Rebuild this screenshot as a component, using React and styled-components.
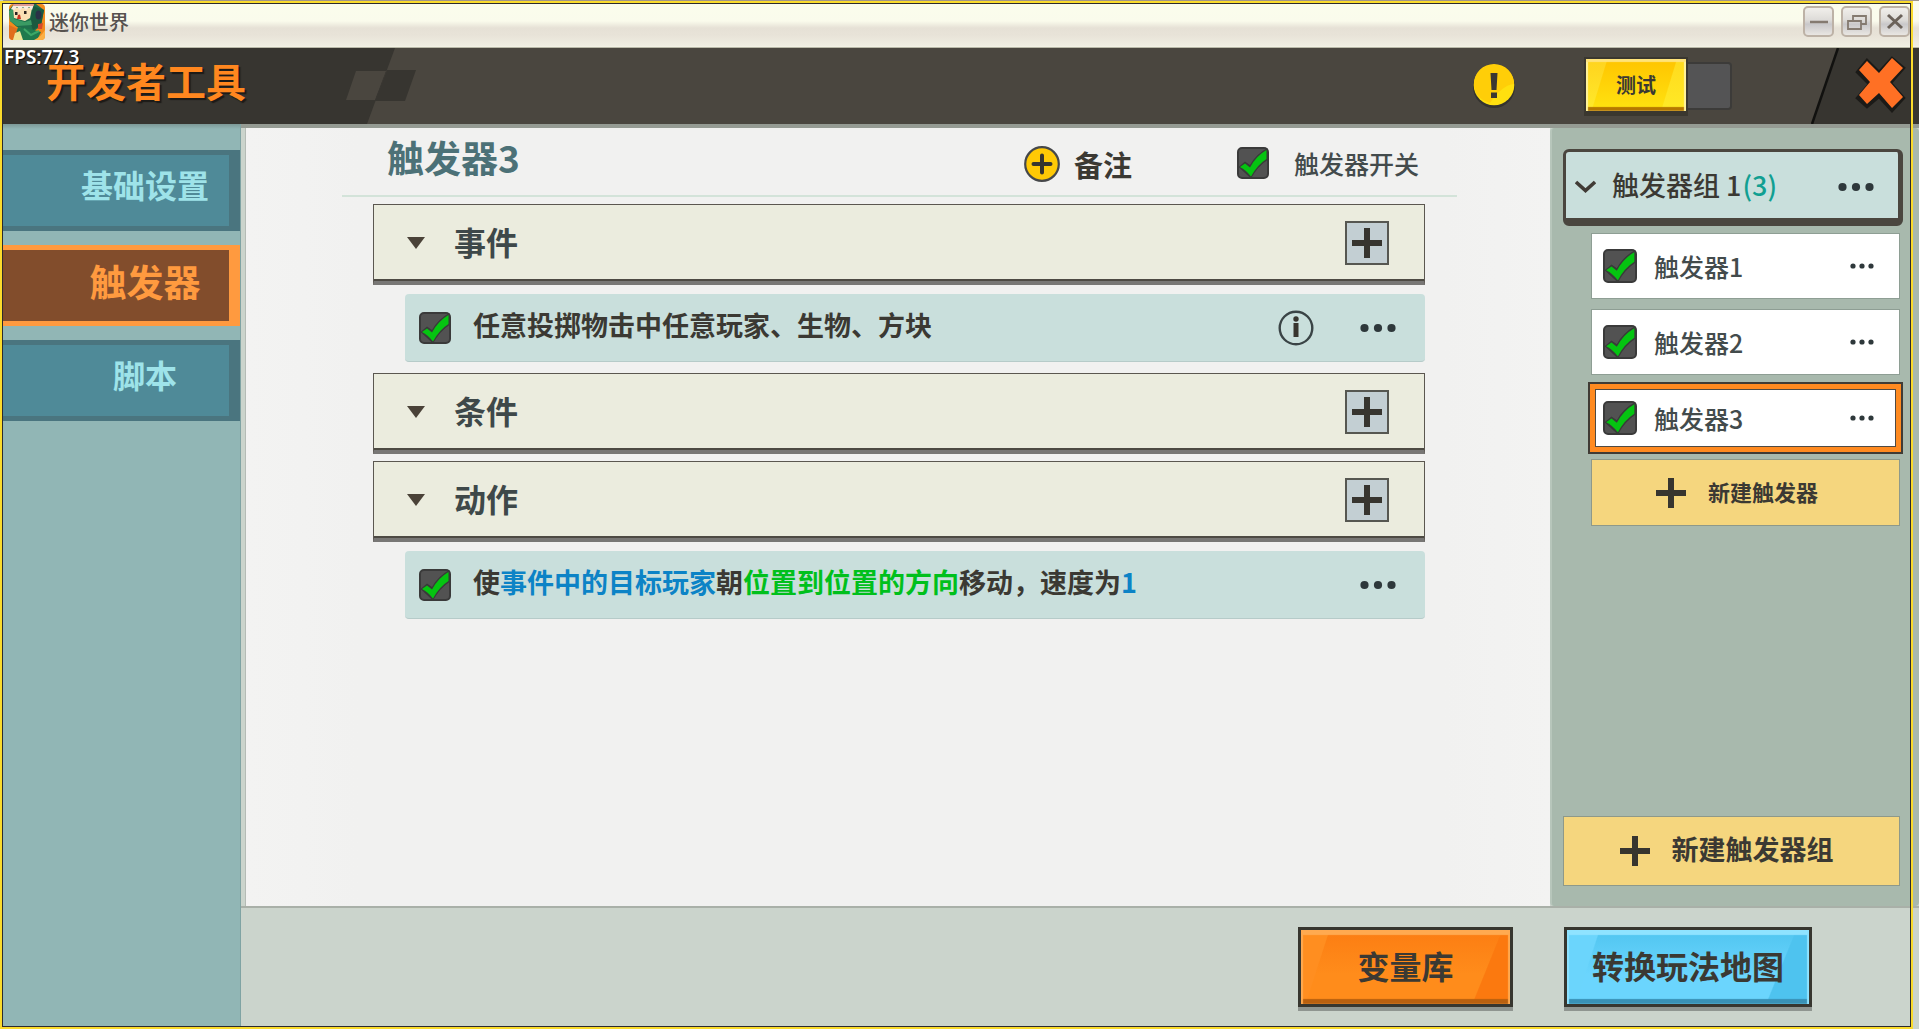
import { useState } from "react"
import styled, { createGlobalStyle } from "styled-components"

const GlobalStyle = createGlobalStyle`
    * {
        box-sizing: border-box;
    }
    body {
        margin: 0;
        font-family: "Noto Sans CJK SC", "Noto Sans", sans-serif;
        font-weight: 700;
        color: #3b3933;
        background: #cbd4cc;
    }
    button {
        font: inherit;
        color: inherit;
        border: 0;
        padding: 0;
        background: none;
        cursor: pointer;
    }
    h1, h2, h3, p, ul {
        margin: 0;
        padding: 0;
        font: inherit;
    }
    svg {
        display: block;
        flex: none;
    }
`

const Page = styled.div`
    position: relative;
    min-height: 100vh;
    display: flex;
    flex-direction: column;
    padding-left: 3px;
`
const Frame = styled.div`
    position: absolute;
    inset: 1px 6px 0 0;
    border: 2px solid #fadb2c;
    pointer-events: none;
    z-index: 5;
    &::after {
        content: "";
        position: absolute;
        inset: 0;
        border: 1px solid #2c2a2e;
    }
`

/* window title bar */
const TitleBar = styled.div`
    height: 48px;
    flex: none;
    display: flex;
    align-items: center;
    padding: 0 9px 5px 6px;
    border-top: 1px solid #a0958a;
    border-bottom: 1px solid #b9b9a8;
    background: linear-gradient(#fbfdec 0, #fafbec 20px, #e6e1d6 27px, #e8e3d8 34px, #f0eee2 45px, #fdfef0 47px);
`
const WindowName = styled.span`
    flex: 1;
    margin-left: 4px;
    font-size: 20px;
    line-height: 24px;
    font-weight: 500;
    color: #57524f;
`
const WindowButtons = styled.div`
    display: flex;
    gap: 7px;
`
const WindowButton = styled.button`
    width: 31px;
    height: 31px;
    display: grid;
    place-items: center;
    border: 2px solid #bdb2a6;
    border-radius: 5px;
    background: linear-gradient(#f1efeb, #dddbd8 45%, #c9c8ca 60%, #e9e6e2);
`

/* tool header */
const Header = styled.header`
    position: relative;
    height: 76px;
    flex: none;
    display: flex;
    align-items: center;
    justify-content: space-between;
    background: #4a463f;
`
const HeaderLeft = styled.div`
    height: 76px;
    display: grid;
    align-items: center;
    > * {
        grid-area: 1 / 1;
    }
`
const HeaderTitle = styled.h1`
    margin: 0 0 12px 43px;
    font-size: 40px;
    line-height: 44px;
    color: #ff871f;
    text-shadow: 2px 2px 1px #1c1a17;
`
const Fps = styled.span`
    position: absolute;
    top: -4px;
    left: 1px;
    font-family: "Noto Sans", sans-serif;
    font-size: 19px;
    line-height: 26px;
    font-weight: 600;
    color: #fff;
    text-shadow: 1px 1px 1px #000;
`
const HeaderRight = styled.div`
    display: flex;
    align-items: center;
`
const TestSwitch = styled.button`
    display: flex;
    align-items: center;
    margin: 0 79px 0 68px;
`
const TestKnob = styled.span`
    width: 104px;
    height: 59px;
    display: grid;
    place-items: center;
    border: 2px solid #3a372f;
    border-bottom-width: 5px;
    font-size: 20px;
    line-height: 24px;
    background: linear-gradient(107deg, rgba(255, 255, 120, 0.25) 18%, transparent 19%, transparent 78%, rgba(255, 240, 60, 0.5) 79%),
        linear-gradient(#ffc400, #ffe310);
    box-shadow: inset 0 3px 1px #ffe37a, inset 2px 0 1px #fff3a0, inset -2px 0 1px #fff3a0, inset 0 -4px 1px #b67800;
`
const TestSlot = styled.span`
    width: 44px;
    height: 48px;
    border: 2px solid #3c3b39;
    border-left: 0;
    border-radius: 0 4px 4px 0;
    background: #545455;
`
const CloseButton = styled.button`
    height: 76px;
`

/* body */
const Body = styled.div`
    flex: 1;
    display: flex;
`
const Sidebar = styled.nav`
    width: 238px;
    flex: none;
    display: flex;
    flex-direction: column;
    gap: 14px;
    padding-top: 26px;
    background: linear-gradient(#7d9997, #91b6b5 5px);
    border-right: 1px solid #7fa3a3;
`
const Tab = styled.button`
    height: 81px;
    padding: 0 0 ${props => props.$active ? 10 : 14}px 58px;
    border: 5px solid ${props => props.$active ? "#ff9a3f" : "#4a757f"};
    border-width: 5px 11px 5px 0;
    background: ${props => props.$active ? "#824d2c" : "#4f8a98"};
    color: ${props => props.$active ? "#ff9a3f" : "#9ee3e9"};
    font-size: ${props => props.$active ? 37 : 32}px;
    line-height: 40px;
`
const Content = styled.div`
    flex: 1;
    min-width: 0;
    display: flex;
    flex-direction: column;
    background: #cbd4cc;
`
const Workspace = styled.div`
    flex: 1;
    display: flex;
    padding-left: 4px;
    border-top: 4px solid #959b93;
    border-bottom: 2px solid #a9b0a8;
`
const Editor = styled.main`
    flex: 1;
    min-width: 0;
    padding: 0 93px 0 96px;
    background: linear-gradient(90deg, #f3f3f2, #f1f1f0 112px, #f1f1f0 calc(100% - 105px), #f3f3f2);
    border-left: 1px solid #b4bbb5;
`
const EditorHead = styled.div`
    height: 69px;
    display: flex;
    align-items: center;
    padding: 2px 38px 0 45px;
    border-bottom: 2px solid #d3e3d9;
`
const TriggerTitle = styled.h2`
    flex: 1;
    font-size: 37px;
    line-height: 40px;
    padding-bottom: 12px;
    color: #4c7177;
`
const NoteButton = styled.button`
    display: flex;
    align-items: center;
    gap: 14px;
    margin-right: 105px;
    padding-top: 2px;
    font-size: 29px;
    line-height: 32px;
`
const SwitchLabel = styled.label`
    display: flex;
    align-items: center;
    gap: 25px;
    font-size: 25px;
    line-height: 32px;
    font-weight: 500;
    color: #434b4c;
`
const Sections = styled.div`
    padding: 7px 32px 0 31px;
`
const SectionHead = styled.div`
    height: 81px;
    margin-top: ${props => props.$first ? 0 : props.$tight ? 7 : 11}px;
    padding: 0 35px 0 33px;
    display: flex;
    align-items: center;
    border: 1px solid #5b5750;
    border-bottom: 4px solid #787775;
    box-shadow: inset 0 -2px 0 #4d4a43;
    background: #ebecde;
`
const SectionName = styled.h3`
    flex: 1;
    margin-left: 29px;
    padding-bottom: 4px;
    font-size: 32px;
    line-height: 40px;
    color: #3e4849;
`
const AddButton = styled.button`
    width: 44px;
    height: 44px;
    display: grid;
    place-items: center;
    border: 2px solid #565751;
    background: #c3cfd3;
`
const Rule = styled.div`
    height: 68px;
    margin: 9px 0 0 32px;
    padding: 0 29px 0 14px;
    display: flex;
    align-items: center;
    gap: 46px;
    border-radius: 4px;
    border-bottom: 1px solid #b6cbc9;
    background: #c9dfdc;
`
const RuleLabel = styled.label`
    flex: 1;
    display: flex;
    align-items: center;
    gap: 22px;
    font-size: 27px;
    line-height: 32px;
`
const RuleText = styled.span`
    padding-bottom: 6px;
`
const Param = styled.span`
    color: ${props => props.$kind === "object" ? "#0c83c6" : "#00c01c"};
`
const IconButton = styled.button`
    display: grid;
    place-items: center;
`

/* check box */
const CheckWrap = styled.span`
    display: grid;
    width: ${props => props.$size}px;
    height: ${props => props.$size}px;
    > * {
        grid-area: 1 / 1;
    }
    svg {
        pointer-events: none;
    }
    input {
        appearance: none;
        margin: 0;
        border: 2px solid #3a3a3a;
        border-radius: 5px;
        background: #525252;
    }
    input:not(:checked) + svg {
        display: none;
    }
`

/* trigger list */
const Triggers = styled.aside`
    width: 369px;
    flex: none;
    display: flex;
    flex-direction: column;
    padding: 21px 16px 20px 11px;
    border-left: 2px solid #b7c6bb;
    border-radius: 4px;
    background: #a8b9ad;
`
const GroupHead = styled.div`
    height: 77px;
    padding: 4px 24px 0 9px;
    display: flex;
    align-items: center;
    border: 3px solid #4a463f;
    border-right-width: 5px;
    border-bottom-width: 8px;
    border-radius: 6px;
    background: #c9dfdc;
`
const GroupName = styled.h3`
    flex: 1;
    margin-left: 16px;
    padding-bottom: 4px;
    font-size: 27px;
    line-height: 32px;
    font-weight: 500;
`
const Count = styled.span`
    margin-left: 1px;
    color: #119f92;
`
const TriggerList = styled.ul`
    list-style: none;
    padding: 7px 3px 0 28px;
    display: flex;
    flex-direction: column;
    gap: 10px;
`
const TriggerItem = styled.li`
    height: 66px;
    padding: 0 25px 0 11px;
    display: flex;
    align-items: center;
    background: #fff;
    border: 1px solid #8e9e94;
    outline: ${props => props.$active ? "5px solid #ff8a20" : "none"};
    outline-offset: -4px;
    box-shadow: ${props => props.$active ? "0 0 0 3px #403b35, inset 0 0 0 4px #4f4a43" : "none"};
`
const TriggerLabel = styled.label`
    flex: 1;
    margin-left: 17px;
    font-size: 25px;
    line-height: 32px;
    font-weight: 500;
    color: #434b4c;
`
const NewButton = styled.button`
    height: ${props => props.$large ? 70 : 67}px;
    margin: ${props => props.$large ? "auto 3px 0 0" : "8px 3px 0 28px"};
    padding-right: ${props => props.$large ? 10 : 17}px;
    display: flex;
    align-items: center;
    justify-content: center;
    gap: 22px;
    border: 1px solid #8e998a;
    background: #f5d67e;
    font-size: ${props => props.$large ? 27 : 22}px;
    line-height: 32px;
    span {
        padding-bottom: 4px;
    }
`

/* footer */
const Footer = styled.footer`
    height: 121px;
    display: flex;
    justify-content: flex-end;
    gap: 51px;
    padding: 19px 107px 0 0;
`
const FooterButton = styled.button`
    height: 80px;
    width: ${props => props.$wide ? 248 : 215}px;
    padding-bottom: 5px;
    border: 3px solid #37362f;
    font-size: 32px;
    line-height: 40px;
    background: ${props => props.$wide
        ? "linear-gradient(108deg, #6bd5fc 12%, transparent 12.5%), linear-gradient(112deg, transparent 84%, #4ec3ef 84.5%), linear-gradient(#50c5f0, #6bd5fd 60%)"
        : "linear-gradient(108deg, #ff8e20 12%, transparent 12.5%), linear-gradient(112deg, transparent 84%, #fb790f 84.5%), linear-gradient(#fc7d12, #ff8c1b 60%)"};
    box-shadow: 0 4px 0 #8f9590,
        inset 0 5px 1px ${props => props.$wide ? "#8fe3ff" : "#ffaa50"},
        inset 2px 0 1px ${props => props.$wide ? "#8fe3ff" : "#ffaa50"},
        inset -2px 0 1px ${props => props.$wide ? "#8fe3ff" : "#ffaa50"},
        inset 0 -5px 1px ${props => props.$wide ? "#3991b5" : "#b9600f"};
`

const GameIcon = () => (
    <svg width="36" height="36" viewBox="0 0 36 36">
        <rect width="36" height="36" rx="4" fill="#f28a1c" />
        <path d="M0 21 9 25 4 36Q0 36 0 32Z" fill="#e06f1d" />
        <path d="M0 6 4 1 27 0 35 6 32 22 25 27 8 23 1 17Z" fill="#1f6f4b" />
        <path d="M24 2 35 6 32 21 24 26 21 18Z" fill="#1a5a40" />
        <path d="M0 7 4 4 5 15 16 18 22 16 23 21 8 22 1 17Z" fill="#3a9a63" />
        <path d="M4 4H23L21 14 16 17 5 14Z" fill="#fbe0b4" />
        <path d="M2 5 5 0H25L23 6 20 3 17 6 14 3 11 6 8 3 5 6Z" fill="#f8ece0" />
        <path d="M4 1H25" stroke="#d98272" strokeWidth="1.500" />
        <rect x="6" y="8" width="2.500" height="3" fill="#2b2320" />
        <rect x="15" y="7" width="2.500" height="3" fill="#2b2320" />
        <path d="M9 11 11 10.500 12 15 8 15Z" fill="#c8321f" />
        <ellipse cx="29.500" cy="11" rx="3" ry="4.500" fill="#2a3146" />
        <path d="M9 23 25 26 32 28 28 36H5Z" fill="#1f7a4d" />
        <path d="M15 25 22 31 30 27" stroke="#3ca867" strokeWidth="2" fill="none" />
        <path d="M6 29 11 27 14 36H4Z" fill="#f0e596" />
        <path d="M29 20 34 19 33 25 29 25Z" fill="#d64a2c" />
        <path d="M25 36Q32 33 36 26V32Q36 36 32 36Z" fill="#fbb044" />
    </svg>
)

const Dots = ({ small }) => (
    small
        ? <svg width="24" height="8" viewBox="0 0 24 8" fill="#2e383b">
            <circle cx="3" cy="4" r="2.6" /><circle cx="12" cy="4" r="2.6" /><circle cx="21" cy="4" r="2.6" />
        </svg>
        : <svg width="36" height="10" viewBox="0 0 36 10" fill="#2e383b">
            <circle cx="4.500" cy="5" r="4.100" /><circle cx="18" cy="5" r="4.100" /><circle cx="31.500" cy="5" r="4.100" />
        </svg>
)

const Plus = () => (
    <svg width="30" height="30" viewBox="0 0 30 30" stroke="#37352f" strokeWidth="6">
        <path d="M15 0V30M0 15H30" />
    </svg>
)

const Check = ({ id, size = 32 }) => (
    <CheckWrap $size={size}>
        <input type="checkbox" id={id} defaultChecked />
        <svg width={size} height={size} viewBox="0 0 32 32">
            <path d="M1.500 20 8 14.500 13 18Q19 7 30.500 1V13Q21 19 14 31.500Z" fill="#393a39" />
            <path d="M3 20 8 16.500 13 20.500Q19 9 29.500 3V12Q20 18 14 29.500Q9 23 3 20Z" fill="#05c411" />
        </svg>
    </CheckWrap>
)

const tabs = ["基础设置", "触发器", "脚本"]
const triggers = ["触发器1", "触发器2", "触发器3"]

const Section = ({ name, first, tight }) => (
    <SectionHead $first={first} $tight={tight}>
        <svg width="18" height="12" viewBox="0 0 18 12">
            <path d="M0 0H18L9 12Z" fill="#4a4238" />
        </svg>
        <SectionName>{name}</SectionName>
        <AddButton aria-label={name}><Plus /></AddButton>
    </SectionHead>
)

const App = () => {
    const [tab, setTab] = useState("触发器")
    const [current, setCurrent] = useState("触发器3")

    return (
        <Page>
            <GlobalStyle />
            <TitleBar>
                <GameIcon />
                <WindowName>迷你世界</WindowName>
                <WindowButtons>
                    <WindowButton aria-label="最小化">
                        <svg width="20" height="20" viewBox="0 0 20 20" stroke="#847a70" strokeWidth="2.500">
                            <path d="M1 10H19" />
                        </svg>
                    </WindowButton>
                    <WindowButton aria-label="还原">
                        <svg width="20" height="20" viewBox="0 0 20 20" fill="none" stroke="#847a70" strokeWidth="1.800">
                            <path d="M6 8V4H19V12H14M1 9H14V17H1Z" />
                        </svg>
                    </WindowButton>
                    <WindowButton aria-label="关闭窗口">
                        <svg width="20" height="20" viewBox="0 0 20 20" stroke="#6b625a" strokeWidth="3">
                            <path d="M3 3 17 16M17 3 3 16" />
                        </svg>
                    </WindowButton>
                </WindowButtons>
            </TitleBar>

            <Header>
                <HeaderLeft>
                    <svg width="416" height="76" viewBox="3 0 416 76">
                        <path d="M3 0H395L367 76H3Z" fill="#373530" />
                        <path d="M356 23H386L375 52H346Z" fill="#4a463f" />
                        <path d="M387 22H416L405 53H375Z" fill="#373530" />
                    </svg>
                    <HeaderTitle>开发者工具</HeaderTitle>
                </HeaderLeft>
                <Fps>FPS:77.3</Fps>
                <HeaderRight>
                    <IconButton aria-label="提示">
                        <svg width="44" height="46" viewBox="0 0 44 46">
                            <circle cx="22" cy="24" r="21" fill="#34332f" />
                            <circle cx="22" cy="22" r="20.300" fill="#ffe00f" />
                            <path d="M2 21A20 20 0 0 1 42 21Q30 22 18 40Q2 35 2 21Z" fill="#ffce08" />
                            <path d="M18.500 10H25.500L24.500 27H19.500ZM19 29.500H25V35H19Z" fill="#3b3832" />
                        </svg>
                    </IconButton>
                    <TestSwitch role="switch" aria-checked="false">
                        <TestKnob>测试</TestKnob>
                        <TestSlot />
                    </TestSwitch>
                    <CloseButton aria-label="关闭">
                        <svg width="108" height="76" viewBox="0 0 108 76">
                            <path d="M27 0H108V76H1Z" fill="#373530" />
                            <path d="M27 0 1 76" stroke="#11110f" strokeWidth="2.500" />
                            <path d="M47 24 56 13 68 25 81 11 92 20 79 35 92 50 81 62 68 48 56 58 47 50 59 36Z" fill="#1b1a17" stroke="#1b1a17" strokeWidth="4" />
                            <path d="M48 22 56 13 68 25 81 10 92 20 79 34 92 49 81 60 68 45 56 56 48 47 59 34Z" fill="#ff7024" />
                        </svg>
                    </CloseButton>
                </HeaderRight>
            </Header>

            <Body>
                <Sidebar>
                    {tabs.map(t => (
                        <Tab key={t} $active={t === tab} onClick={() => setTab(t)}>{t}</Tab>
                    ))}
                </Sidebar>

                <Content>
                    <Workspace>
                        <Editor>
                            <EditorHead>
                                <TriggerTitle>{current}</TriggerTitle>
                                <NoteButton>
                                    <svg width="36" height="36" viewBox="0 0 36 36">
                                        <circle cx="18" cy="18" r="16.800" fill="#ffc905" stroke="#46484a" strokeWidth="2.200" />
                                        <path d="M18 9.500V26.500M9.500 18H26.500" stroke="#37352f" strokeWidth="4" strokeLinecap="round" />
                                    </svg>
                                    备注
                                </NoteButton>
                                <SwitchLabel>
                                    <Check id="trigger-switch" />
                                    触发器开关
                                </SwitchLabel>
                            </EditorHead>

                            <Sections>
                                <Section name="事件" first />
                                <Rule>
                                    <RuleLabel>
                                        <Check id="event-1" />
                                        <RuleText>任意投掷物击中任意玩家、生物、方块</RuleText>
                                    </RuleLabel>
                                    <IconButton aria-label="说明">
                                        <svg width="36" height="36" viewBox="0 0 36 36">
                                            <circle cx="18" cy="18" r="16.300" fill="none" stroke="#3a4446" strokeWidth="2.400" />
                                            <circle cx="18" cy="9" r="2.700" fill="#37352f" />
                                            <path d="M18 13V27" stroke="#37352f" strokeWidth="5" />
                                        </svg>
                                    </IconButton>
                                    <IconButton aria-label="更多"><Dots /></IconButton>
                                </Rule>
                                <Section name="条件" />
                                <Section name="动作" tight />
                                <Rule>
                                    <RuleLabel>
                                        <Check id="action-1" />
                                        <RuleText>
                                            使<Param $kind="object">事件中的目标玩家</Param>朝<Param>位置到位置的方向</Param>移动，速度为<Param $kind="object">1</Param>
                                        </RuleText>
                                    </RuleLabel>
                                    <IconButton aria-label="更多"><Dots /></IconButton>
                                </Rule>
                            </Sections>
                        </Editor>

                        <Triggers>
                            <GroupHead>
                                <svg width="21" height="14" viewBox="0 0 21 14" fill="none" stroke="#403b35" strokeWidth="3.600">
                                    <path d="M1 2 10.500 10.500 20 2" />
                                </svg>
                                <GroupName>触发器组 1<Count>(3)</Count></GroupName>
                                <IconButton aria-label="更多"><Dots /></IconButton>
                            </GroupHead>
                            <TriggerList>
                                {triggers.map(t => (
                                    <TriggerItem key={t} $active={t === current} onClick={() => setCurrent(t)}>
                                        <Check id={t} size={34} />
                                        <TriggerLabel htmlFor={t}>{t}</TriggerLabel>
                                        <IconButton aria-label="更多"><Dots small /></IconButton>
                                    </TriggerItem>
                                ))}
                            </TriggerList>
                            <NewButton><Plus /><span>新建触发器</span></NewButton>
                            <NewButton $large><Plus /><span>新建触发器组</span></NewButton>
                        </Triggers>
                    </Workspace>

                    <Footer>
                        <FooterButton>变量库</FooterButton>
                        <FooterButton $wide>转换玩法地图</FooterButton>
                    </Footer>
                </Content>
            </Body>
            <Frame />
        </Page>
    )
}

export default App
